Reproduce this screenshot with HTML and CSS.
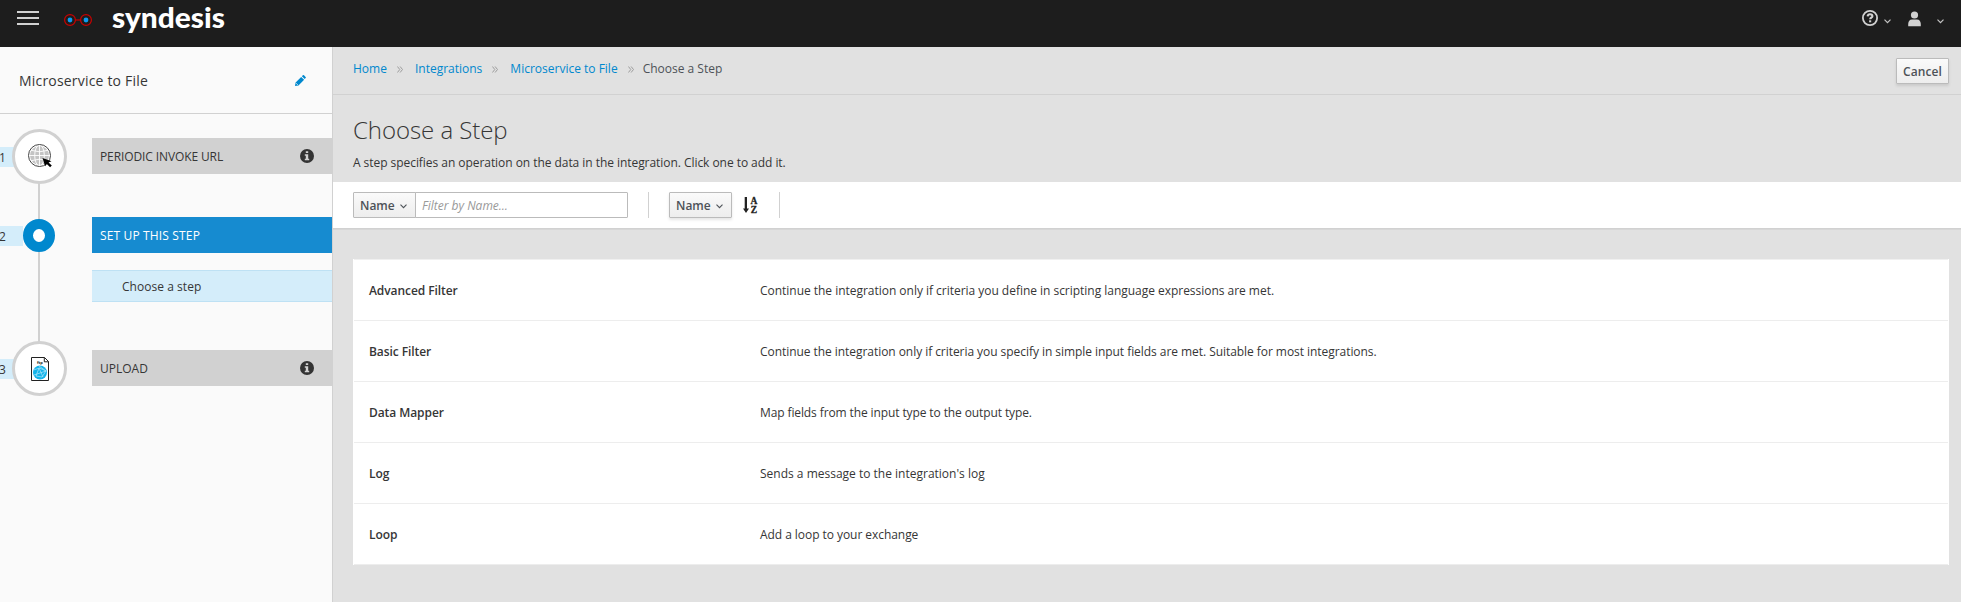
FILE: index.html
```html
<!DOCTYPE html>
<html lang="en">
<head>
<meta charset="utf-8">
<title>Syndesis - Choose a Step</title>
<link rel="stylesheet" href="styles.css">
</head>
<body>
<header class="masthead">
  <svg class="hamburger" width="22" height="14" viewBox="0 0 22 14"><path d="M0 1h22M0 7h22M0 13h22" stroke="#d1d1d1" stroke-width="2"/></svg>
  <svg class="glasses" width="28" height="12" viewBox="0 0 28 12"><g fill="none" stroke="#c00" stroke-width="1.2"><circle cx="6" cy="6" r="5.4"/><circle cx="22" cy="6" r="5.4"/><path d="M11.4 6h5.2"/></g><circle cx="6" cy="6" r="2.4" fill="#0c9bf0"/><circle cx="22" cy="6" r="2.4" fill="#0c9bf0"/></svg>
  <svg class="wordmark" width="114" height="40" viewBox="0 0 114 40"><text class="wordmark-text" x="0" y="28" textLength="113" lengthAdjust="spacingAndGlyphs">syndesis</text></svg>
  <nav class="tools">
    <svg class="help" width="16" height="16" viewBox="0 0 16 16"><circle cx="8" cy="8" r="7.1" fill="none" stroke="#d1d1d1" stroke-width="1.8"/><path d="M5.600 6.300C5.800 4.900 6.700 4.300 8 4.300c1.400 0 2.400.700 2.400 1.900 0 1.500-2.200 1.500-2.200 3" fill="none" stroke="#d1d1d1" stroke-width="2.1"/><path d="M7.100 10.300h2.100v2H7.100z" fill="#d1d1d1"/></svg>
    <svg class="caret-help" width="7" height="5" viewBox="0 0 7 5"><path d="M.5.700l3 3 3-3" fill="none" stroke="#c4c4c4" stroke-width="1.200"/></svg>
    <svg class="user" width="13" height="16" viewBox="0 0 13 16"><circle cx="6.500" cy="4" r="3.600" fill="#d1d1d1"/><path d="M.2 15.300v-2.200C.2 10.500 1.700 8.500 4 8.500h5c2.300 0 3.800 2 3.800 4.600v2.200z" fill="#d1d1d1"/></svg>
    <svg class="caret-user" width="7" height="5" viewBox="0 0 7 5"><path d="M.5.700l3 3 3-3" fill="none" stroke="#c4c4c4" stroke-width="1.200"/></svg>
  </nav>
</header>
<div class="shell">
  <aside class="sidebar">
    <div class="flow-name">
      <span>Microservice to File</span>
      <svg width="11" height="11" viewBox="0 0 11 11"><path d="M0 11l.6-3.500 5.600-5.600 2.900 2.900-5.600 5.600zM6.900 1.200l.9-.9q.6-.5 1.200 0l1.600 1.600q.6.600 0 1.200l-.9.900z" fill="#0088ce"/><path d="M1.100 8.200l1.700 1.700" stroke="#fafafa" stroke-width=".8"/></svg>
    </div>
    <div class="steps">
      <div class="step">
        <span class="num">1</span>
        <span class="ring"><svg class="globe" width="27" height="27" viewBox="0 0 27 27"><circle cx="12.500" cy="12.500" r="9.500" fill="#c4c4c4"/><g fill="none" stroke="#fff" stroke-width=".9"><ellipse cx="12.500" cy="12.500" rx="4.800" ry="10.500"/><path d="M12.500 2v21M2 12.500h21M4 7.300q8.500 3 17 0M4 17.700q8.500-3 17 0"/></g><circle cx="12.500" cy="12.500" r="11" fill="none" stroke="#444" stroke-width="1"/><path d="M15.500 15l2.600 8.300 1.700-2.200 3.300 3.200 1.700-1.700-3.300-3.100 3-1.300z" fill="#000"/></svg></span>
        <div class="label"><span class="tight">PERIODIC INVOKE URL</span><svg class="info" width="14" height="14" viewBox="0 0 14 14"><circle cx="7" cy="7" r="7" fill="#333"/><path d="M5.800 2.200h2.400v1.900H5.800zM4.800 5.300h3.400v4.500h1v1.500H4.800V9.800h1v-3h-1z" fill="#d1d1d1"/></svg></div>
      </div>
      <div class="step active">
        <span class="num">2</span>
        <span class="ring"></span>
        <div class="label"><span class="loose">SET UP THIS STEP</span></div>
      </div>
      <div class="substep">Choose a step</div>
      <div class="step last">
        <span class="num">3</span>
        <span class="ring"><svg class="ftp-file" width="18" height="24" viewBox="0 0 18 24"><path d="M.5.500h13l4 4v19H.5z" fill="#fff" stroke="#222" stroke-width="1"/><path d="M13.300.500v4.300h4.200" fill="none" stroke="#222" stroke-width="1"/><text class="ftp" x="6" y="6.600">ftp</text><circle cx="9" cy="15.500" r="7" fill="#14b4ea"/><path d="M2.500 13l6-2 6.500 3-4 6-6-1 3-8 4 9M3 18l12-4M8 9l7 5" fill="none" stroke="#aee6fa" stroke-width=".7"/></svg></span>
        <div class="label"><span>UPLOAD</span><svg class="info" width="14" height="14" viewBox="0 0 14 14"><circle cx="7" cy="7" r="7" fill="#333"/><path d="M5.800 2.200h2.400v1.900H5.800zM4.800 5.300h3.400v4.500h1v1.500H4.800V9.800h1v-3h-1z" fill="#d1d1d1"/></svg></div>
      </div>
    </div>
  </aside>
  <main class="content">
    <div class="topbar">
      <nav class="crumbs">
        <a>Home</a><svg class="sep" width="6" height="7" viewBox="0 0 6 7"><path d="M.4.500l2.400 3-2.400 3M3.100.500l2.400 3-2.400 3" fill="none" stroke="#9c9c9c" stroke-width="1"/></svg>
        <a>Integrations</a><svg class="sep" width="6" height="7" viewBox="0 0 6 7"><path d="M.4.500l2.400 3-2.400 3M3.100.500l2.400 3-2.400 3" fill="none" stroke="#9c9c9c" stroke-width="1"/></svg>
        <a>Microservice to File</a><svg class="sep last-sep" width="6" height="7" viewBox="0 0 6 7"><path d="M.4.500l2.400 3-2.400 3M3.100.500l2.400 3-2.400 3" fill="none" stroke="#9c9c9c" stroke-width="1"/></svg>
        <span>Choose a Step</span>
      </nav>
      <button class="btn cancel">Cancel</button>
    </div>
    <div class="intro">
      <h1>Choose a Step</h1>
      <p>A step specifies an operation on the data in the integration. Click one to add it.</p>
    </div>
    <div class="toolbar">
      <button class="btn picker flat">Name<svg width="7" height="5" viewBox="0 0 7 5"><path d="M.5.700l3 3 3-3" fill="none" stroke="#4d5258" stroke-width="1.100"/></svg></button>
      <input class="filter" placeholder="Filter by Name...">
      <i class="rule"></i>
      <button class="btn picker">Name<svg width="7" height="5" viewBox="0 0 7 5"><path d="M.5.700l3 3 3-3" fill="none" stroke="#4d5258" stroke-width="1.100"/></svg></button>
      <svg class="sort" width="15" height="18" viewBox="0 0 15 18"><path d="M1.700 1h2.300v11.500h2L3 17 0 12.500h1.700z" fill="#222"/><text class="az" x="11" y="7.500">A</text><text class="az" x="11" y="17">Z</text></svg>
      <i class="rule end"></i>
    </div>
    <div class="list">
      <div class="row"><b>Advanced Filter</b><span class="snug">Continue the integration only if criteria you define in scripting language expressions are met.</span></div>
      <div class="row"><b>Basic Filter</b><span class="close">Continue the integration only if criteria you specify in simple input fields are met. Suitable for most integrations.</span></div>
      <div class="row"><b>Data Mapper</b><span class="tight">Map fields from the input type to the output type.</span></div>
      <div class="row"><b>Log</b><span>Sends a message to the integration's log</span></div>
      <div class="row"><b>Loop</b><span class="close">Add a loop to your exchange</span></div>
    </div>
  </main>
</div>
</body>
</html>
```
FILE: styles.css
```css
* { box-sizing: border-box; }
body {
  margin: 0;
  height: 602px;
  display: flex;
  flex-direction: column;
  overflow: hidden;
  font: 12px/20px "Open Sans", sans-serif;
  color: #363636;
  background: #e1e1e1;
}
svg { display: block; flex: none; }
.masthead {
  height: 47px;
  flex: none;
  display: flex;
  align-items: flex-start;
  background: #1d1d1d;
}
.hamburger { margin: 11px 0 0 17px; }
.glasses { margin: 14px 0 0 25px; }
.wordmark { margin-left: 20px; }
.wordmark-text { font: 900 29px Lato, sans-serif; fill: #fff; }
.tools { margin-left: auto; display: flex; align-items: flex-start; padding-right: 17px; }
.help { margin-top: 10px; }
.caret-help { margin: 19px 0 0 6px; }
.user { margin: 11px 0 0 17px; }
.caret-user { margin: 19px 0 0 16px; }
.shell { flex: 1; display: flex; min-height: 0; }
.sidebar {
  width: 333px;
  flex: none;
  background: #fafafa;
  border-right: 1px solid #d1d1d1;
}
.flow-name {
  height: 67px;
  padding: 1px 26px 0 19px;
  display: flex;
  align-items: center;
  justify-content: space-between;
  border-bottom: 1px solid #d1d1d1;
  font-size: 14px;
  letter-spacing: .19px;
}
.steps {
  padding-top: 24px;
  display: flex;
  flex-direction: column;
  background: linear-gradient(#d1d1d1, #d1d1d1) 38px 40px / 2px 190px no-repeat;
}
.step { height: 36px; display: flex; align-items: center; margin-bottom: 43px; }
.num {
  width: 23px;
  height: 20px;
  margin: 2px -11px 0 0;
  background: #d4edfa;
  text-indent: -1px;
  line-height: 21px;
  flex: none;
}
.ring {
  width: 55px;
  height: 55px;
  flex: none;
  display: grid;
  place-items: center;
  border: 3px solid #d1d1d1;
  border-radius: 50%;
  background: #fff;
  margin: 1px 25px 0 0;
}
.globe { margin-left: 2px; }
.ftp-file { margin-left: 1px; }
.label {
  flex: 1;
  height: 36px;
  padding: 0 18px 0 8px;
  display: flex;
  align-items: center;
  justify-content: space-between;
  background: #d1d1d1;
}
.label span { padding-top: 1px; }
.snug { letter-spacing: -.026px; }
.close { letter-spacing: -.053px; }
.tight { letter-spacing: -.11px; }
.loose { letter-spacing: .15px; }
.active { margin-bottom: 17px; }
.active .num { margin-right: 0; }
.active .ring { width: 32px; height: 33px; border: 10px solid #0088ce; margin-right: 37px; }
.active .label { background: #168bd0; color: #fff; }
.substep {
  height: 32px;
  margin: 0 0 48px 92px;
  padding-left: 30px;
  line-height: 31px;
  letter-spacing: .04px;
  background: #d4edfa;
  border: solid #bee1f4;
  border-width: 1px 0;
}
.ftp { font: bold 4px "Open Sans", sans-serif; fill: #222; }
.content { flex: 1; min-width: 0; }
.topbar {
  height: 48px;
  padding: 0 12px 0 20px;
  display: flex;
  justify-content: space-between;
  align-items: flex-start;
  border-bottom: 1px solid #d1d1d1;
}
.crumbs { display: flex; align-items: center; margin-top: 12px; color: #4d5258; }
.crumbs a { color: #0088ce; }
.sep { margin: 1px 12px 0 10px; }
.last-sep { margin-right: 9px; }
.btn {
  height: 26px;
  padding: 0 6px;
  display: flex;
  align-items: center;
  border: 1px solid #bbb;
  border-radius: 1px;
  background: linear-gradient(#fafafa, #ededed);
  box-shadow: 0 2px 3px rgba(3, 3, 3, .1);
  font: 600 12px "Open Sans", sans-serif;
  color: #4d5258;
}
.picker { width: 63px; justify-content: space-between; padding-right: 8px; }
.picker svg { margin-top: 2px; }
.flat { box-shadow: none; border-radius: 1px 0 0 1px; }
.cancel { margin-top: 11px; width: 53px; letter-spacing: .1px; }
.intro { height: 87px; padding: 19px 20px 0; }
h1 { margin: 0; font-size: 24px; line-height: 32px; font-weight: 300; letter-spacing: -.06px; }
p { margin: 7px 0 0; letter-spacing: -.05px; }
.toolbar {
  height: 47px;
  padding: 10px 20px 0;
  display: flex;
  background: #fff;
  border-bottom: 1px solid #d1d1d1;
  box-shadow: 0 1px 0 rgba(0, 0, 0, .045);
}
.filter {
  width: 213px;
  height: 26px;
  margin-left: -1px;
  padding: 0 6px;
  border: 1px solid #bbb;
  border-radius: 0 1px 1px 0;
  font: 12px "Open Sans", sans-serif;
}
.filter::placeholder { color: #999; font-style: italic; }
.rule { width: 1px; height: 26px; background: #d1d1d1; margin: 0 20px; }
.sort { margin: 4px 0 0 11px; }
.az { font: bold 9.5px "Liberation Serif", serif; fill: #222; stroke: #222; stroke-width: .3px; text-anchor: middle; }
.end { margin-left: 21px; }
.list {
  margin: 30px 12px 0 20px;
  background: #fff;
  border: solid #fff;
  border-width: 0 1px;
  box-shadow: inset 0 1px #f0f0f0;
  padding-top: 1px;
}
.row {
  height: 61px;
  display: flex;
  align-items: center;
  padding: 2px 0 0 15px;
  border-bottom: 1px solid #ededed;
}
.row b { width: 391px; font-weight: 600; letter-spacing: -.07px; }
```
